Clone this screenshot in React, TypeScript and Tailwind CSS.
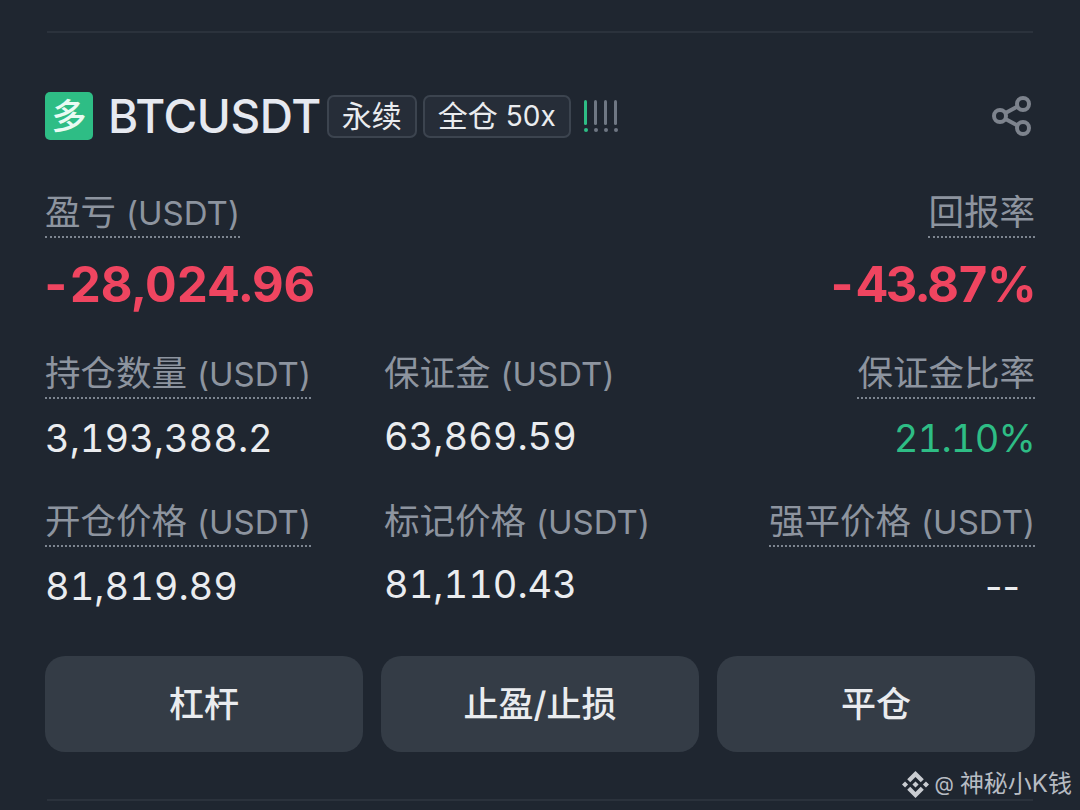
const FONT = "font-['Inter','Noto_Sans_CJK_SC',sans-serif]";

function Label({ children, plain }: { children: React.ReactNode; plain?: boolean }) {
  return (
    <span className={`inline-block border-b-2 border-dotted pb-[2px] text-[35.5px] leading-[42px] text-[#8d949f] whitespace-nowrap ${plain ? "border-transparent" : "border-[#7d8590]"}`}>
      {children}
    </span>
  );
}

function Stat({ label, value, right, green, plain, dash }: { label: React.ReactNode; value: string; right?: boolean; green?: boolean; plain?: boolean; dash?: boolean }) {
  return (
    <div className={right ? "flex flex-col items-end" : "flex flex-col items-start"}>
      <Label plain={plain}>{label}</Label>
      <div className={`${plain ? "mt-[14px]" : "mt-[16px]"} text-[38px] leading-[46px] ${green ? "tracking-[-0.8px] text-[#2ebd85]" : "text-[#eaecef]"} ${dash ? "pr-[15px]" : "tabular-nums"}`}>{value}</div>
    </div>
  );
}

function Unit({ cn }: { cn: string }) {
  return (
    <>
      {cn} <span className="text-[33px]">(USDT)</span>
    </>
  );
}

function Btn({ children }: { children: React.ReactNode }) {
  return (
    <button className="h-[96px] rounded-[20px] bg-[#343c46] text-[35px] font-medium text-[#eaecef]">
      {children}
    </button>
  );
}

export default function App() {
  return (
    <div className={`flex h-[810px] w-[1080px] flex-col overflow-hidden bg-[#1f2630] pl-[45px] pr-[45px] pt-[31px] ${FONT}`}>
      <div className="ml-[2px] mr-[2px] h-[2px] bg-[#2b323c]" />

      <div className="mt-[59px] flex h-[48px] items-center">
        <div className="flex h-[48px] w-[48px] items-center justify-center rounded-[5px] bg-[#2ebd85] text-[35px] font-medium text-[#e9fbf3]">多</div>
        <div className="ml-[15px] text-[46px] font-medium leading-[48px] tracking-[-0.4px] text-[#e6e9f0]">BTCUSDT</div>
        <div className="ml-[6px] flex h-[43px] items-center rounded-[7px] border-2 border-[#3c444f] bg-[#262d38] px-[13px] text-[30px] text-[#eaecef]">永续</div>
        <div className="ml-[6px] flex h-[43px] items-center gap-[8px] rounded-[7px] border-2 border-[#3c444f] bg-[#262d38] px-[13px] text-[30px] text-[#eaecef]">
          全仓 <span className="text-[28px]">50x</span>
        </div>
        <div className="ml-[13px] flex items-end gap-[6px]">
          {["bg-[#2ebd85]", "bg-[#6f7783]", "bg-[#6f7783]", "bg-[#6f7783]"].map((c, i) => (
            <div key={i} className="flex flex-col items-center gap-[3px]">
              <div className={`h-[25px] w-[3px] rounded-full ${c}`} />
              <div className={`h-[4px] w-[4px] rounded-full ${c}`} />
            </div>
          ))}
        </div>
        <svg className="ml-auto mr-[2px]" width="42" height="42" viewBox="0 0 42 42" fill="none" stroke="#7d838d" strokeWidth="4">
          <circle cx="9" cy="21" r="6" />
          <circle cx="32" cy="9" r="6" />
          <circle cx="32" cy="33" r="6" />
          <path d="M14.5 18 L26.5 11.5 M14.5 24 L26.5 30.5" />
        </svg>
      </div>

      <div className="mt-[52px] flex justify-between">
        <div className="flex flex-col items-start">
          <Label><Unit cn="盈亏" /></Label>
          <div className="mt-[19px] text-[49px] font-bold leading-[56px] tracking-[-0.3px] tabular-nums text-[#ef4560]">
            <span className="-ml-[5px] -mr-[2px]">-</span>28,024.96
          </div>
        </div>
        <div className="flex flex-col items-end">
          <Label>回报率</Label>
          <div className="mt-[19px] text-[49px] font-bold leading-[56px] tabular-nums tracking-[-1.8px] text-[#ef4560]">-43.87%</div>
        </div>
      </div>

      <div className="mt-[40px] grid grid-cols-[339px_1fr_auto] gap-y-[40px]">
        <Stat label={<Unit cn="持仓数量" />} value="3,193,388.2" />
        <Stat label={<Unit cn="保证金" />} value="63,869.59" plain />
        <Stat label="保证金比率" value="21.10%" right green />
        <Stat label={<Unit cn="开仓价格" />} value="81,819.89" />
        <Stat label={<Unit cn="标记价格" />} value="81,110.43" plain />
        <Stat label={<Unit cn="强平价格" />} value="--" right dash />
      </div>

      <div className="mt-[47px] grid grid-cols-3 gap-[18px]">
        <Btn>杠杆</Btn>
        <Btn>止盈/止损</Btn>
        <Btn>平仓</Btn>
      </div>

      <div className="-mr-[37px] mt-[18px] flex items-center justify-end gap-[6px] text-[24px] leading-[28px] text-[#b7bcc3]">
        <svg width="27" height="27" viewBox="0 0 126.61 126.61" fill="#c9ccd1">
          <path d="M38.73 53.2l24.59-24.58 24.6 24.6 14.3-14.31L63.32 0 24.43 38.89zM0 63.31l14.3-14.31 14.31 14.31-14.31 14.3zM38.73 73.41l24.59 24.59 24.6-24.6 14.31 14.29-38.9 38.91-38.91-38.88zM98 63.31l14.3-14.31 14.31 14.3-14.31 14.3zM77.83 63.3L63.32 48.78 48.81 63.28l14.51 14.5z" />
        </svg>
        <span className="text-[20px]">@</span>
        <span>神秘小K钱</span>
      </div>
      <div className="ml-[2px] mr-[2px] mt-[1px] h-[2px] bg-[#2b323c]" />
    </div>
  );
}
